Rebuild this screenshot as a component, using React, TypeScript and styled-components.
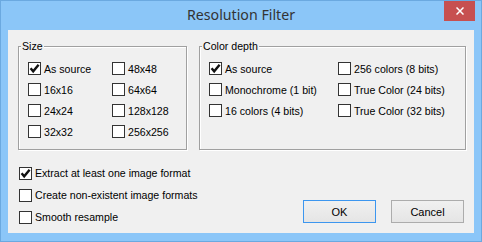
import styled, { createGlobalStyle } from "styled-components";

const Global = createGlobalStyle`
  body { margin: 0; background: #fff; }
`;

/* ── Frame ── */
const Window = styled.div`
  width: 482px;
  height: 242px;
  box-sizing: border-box;
  background: #8bc6f8;
  border: 1px solid #6ba9e0;
  display: flex;
  flex-direction: column;
`;

const TitleBar = styled.div`
  height: 29px;
  display: grid;
  grid-template-columns: 1fr auto 1fr;
  align-items: start;
`;

const Title = styled.div`
  grid-column: 2;
  font-family: "Noto Sans", "Open Sans", sans-serif;
  font-size: 14.2px;
  line-height: 28px;
  color: #333;
`;

const Close = styled.div`
  grid-column: 3;
  justify-self: end;
  margin-right: 6px;
  width: 31px;
  height: 20px;
  background: #c75050;
  display: flex;
  align-items: center;
  justify-content: center;
`;

const Client = styled.div`
  margin: 0 7px;
  height: 203px;
  background: #f0f0f0;
  display: flex;
  flex-direction: column;
  font-family: "Liberation Sans", Arial, sans-serif;
  font-size: 10.6px;
  color: #000;
`;

/* ── Groups ── */
const GroupRow = styled.div`
  display: flex;
  gap: 12px;
  padding: 16px 0 0 10px;
`;

const Group = styled.div<{ $w: number }>`
  position: relative;
  width: ${(p) => p.$w}px;
  height: 104px;
  box-sizing: border-box;
  border: 1px solid #a0a0a0;
  box-shadow: 1px 1px 0 #fff, inset 1px 1px 0 #fff;
  padding: 11px 0 0 9px;
`;

const Legend = styled.span`
  position: absolute;
  top: -7px;
  left: 2px;
  padding: 0 1px;
  background: #f0f0f0;
  line-height: 13px;
`;

const Grid = styled.div<{ $col: number }>`
  display: grid;
  grid-template-columns: ${(p) => p.$col}px auto;
  grid-auto-rows: 21px;
`;

const Option = styled.div<{ $h?: number }>`
  display: flex;
  align-items: center;
  gap: 3px;
  height: ${(p) => p.$h ?? 21}px;
  white-space: nowrap;
`;

const Box = styled.span`
  width: 13px;
  height: 13px;
  box-sizing: border-box;
  border: 1px solid #333;
  background: #fff;
  display: flex;
  align-items: center;
  justify-content: center;
  flex-shrink: 0;
`;

/* ── Bottom ── */
const Bottom = styled.div`
  display: flex;
  justify-content: space-between;
  align-items: flex-end;
  margin-top: 12px;
  padding: 0 10px 0 11px;
`;

const Checks = styled.div`
  display: flex;
  flex-direction: column;
`;

const Buttons = styled.div`
  display: flex;
  gap: 15px;
  margin-bottom: 5px;
`;

const Button = styled.div<{ $focus?: boolean }>`
  width: 73px;
  height: 23px;
  box-sizing: border-box;
  border: 1px solid ${(p) => (p.$focus ? "#3c96ef" : "#acacac")};
  background: linear-gradient(#f0f0f0, #e5e5e5);
  display: flex;
  align-items: center;
  justify-content: center;
  font-size: 11px;
`;

function Check({ on, label, h }: { on?: boolean; label: string; h?: number }) {
  return (
    <Option $h={h}>
      <Box>
        {on && (
          <svg width="11" height="11" viewBox="0 0 11 11">
            <path d="M1.6 5.2 L4.2 8.3 L9.6 1.8" fill="none" stroke="#111" strokeWidth="2.4" />
          </svg>
        )}
      </Box>
      {label}
    </Option>
  );
}

const SIZES = [
  ["As source", true],
  ["48x48", false],
  ["16x16", false],
  ["64x64", false],
  ["24x24", false],
  ["128x128", false],
  ["32x32", false],
  ["256x256", false],
] as const;

const DEPTHS = [
  ["As source", true],
  ["256 colors (8 bits)", false],
  ["Monochrome (1 bit)", false],
  ["True Color (24 bits)", false],
  ["16 colors (4 bits)", false],
  ["True Color (32 bits)", false],
] as const;

export default function App() {
  return (
    <>
      <Global />
      <Window>
        <TitleBar>
          <Title>Resolution Filter</Title>
          <Close>
            <svg width="8" height="8" viewBox="0 0 8 8">
              <path d="M0.5 0.5 L7.5 7.5 M7.5 0.5 L0.5 7.5" stroke="#fff" strokeWidth="1.5" />
            </svg>
          </Close>
        </TitleBar>
        <Client>
          <GroupRow>
            <Group $w={169}>
              <Legend>Size</Legend>
              <Grid $col={84}>
                {SIZES.map(([l, on]) => (
                  <Check key={l} label={l} on={on} />
                ))}
              </Grid>
            </Group>
            <Group $w={267}>
              <Legend>Color depth</Legend>
              <Grid $col={129}>
                {DEPTHS.map(([l, on]) => (
                  <Check key={l} label={l} on={on} />
                ))}
              </Grid>
            </Group>
          </GroupRow>
          <Bottom>
            <Checks>
              <Check h={22} on label="Extract at least one image format" />
              <Check h={22} label="Create non-existent image formats" />
              <Check h={22} label="Smooth resample" />
            </Checks>
            <Buttons>
              <Button $focus>OK</Button>
              <Button>Cancel</Button>
            </Buttons>
          </Bottom>
        </Client>
      </Window>
    </>
  );
}
